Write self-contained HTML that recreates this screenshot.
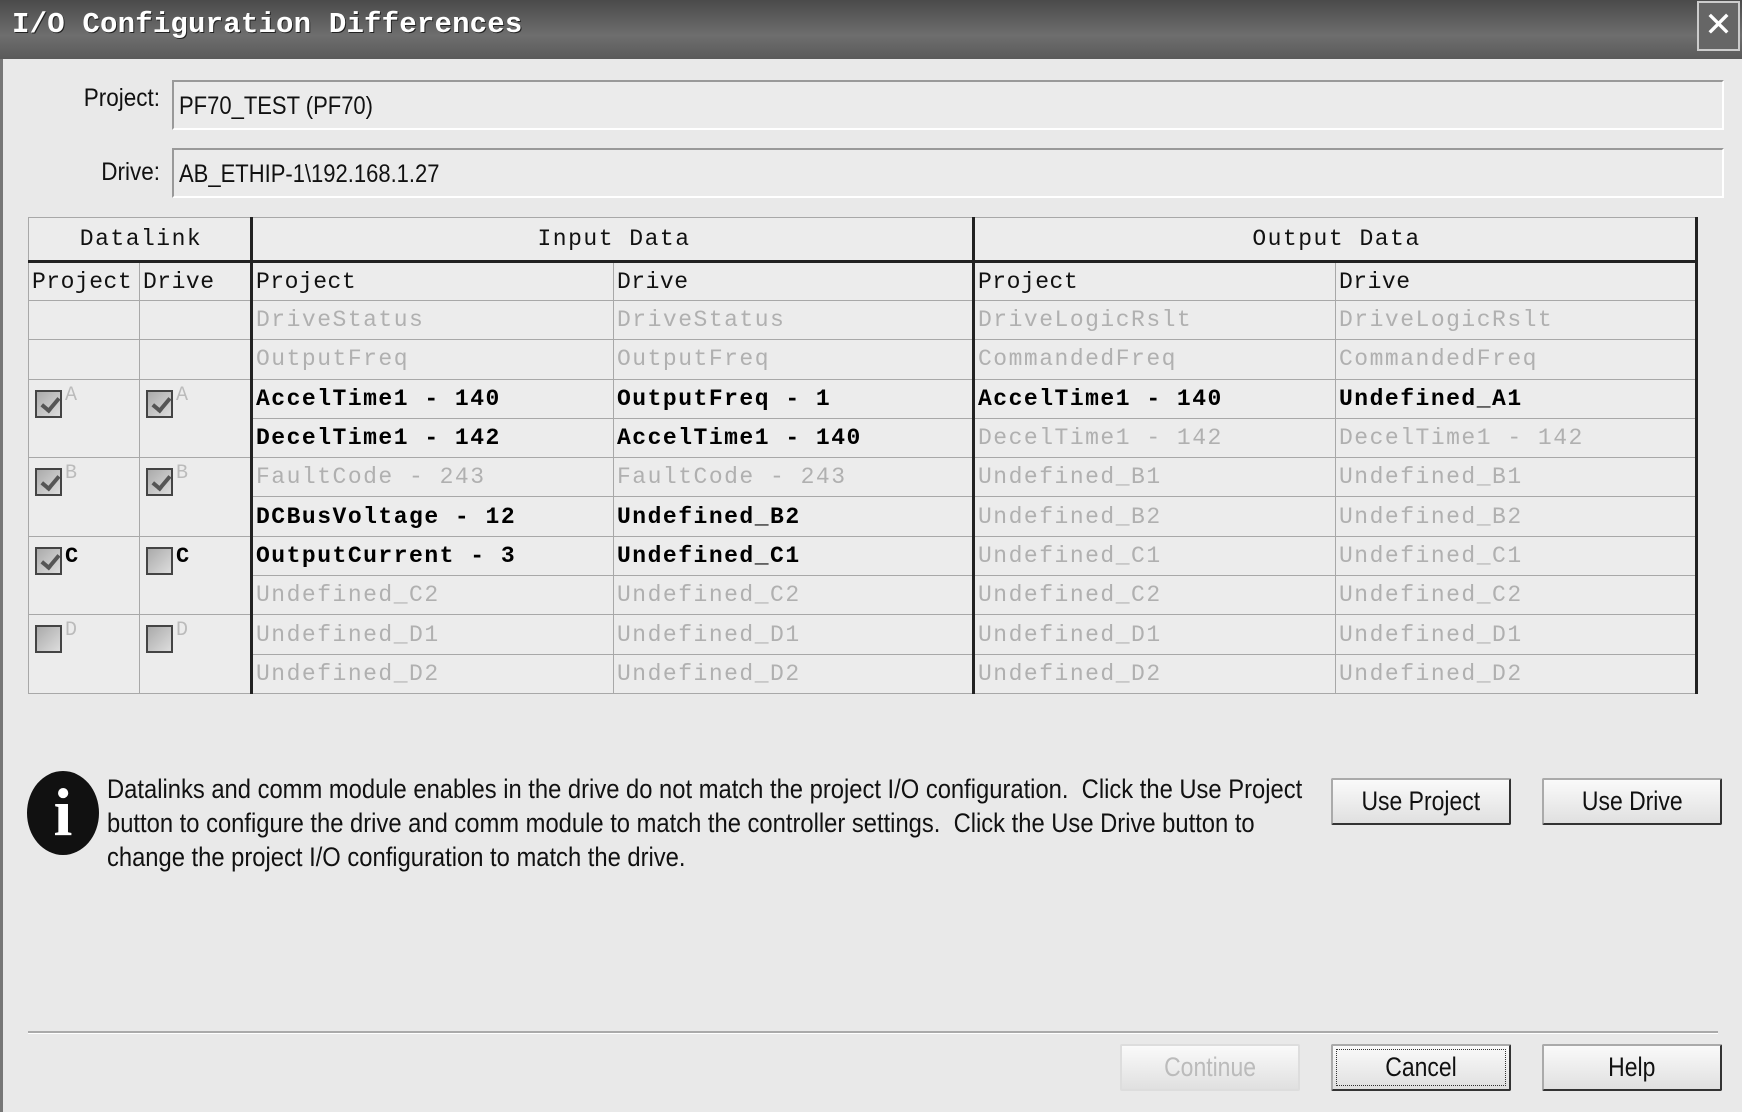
<!DOCTYPE html>
<html><head><meta charset="utf-8"><style>
*{margin:0;padding:0;box-sizing:border-box}
body{width:1742px;height:1112px;background:#e9e9e9;position:relative;overflow:hidden;font-family:"Liberation Sans",sans-serif}
.title{position:absolute;left:0;top:0;width:1742px;height:59px;background:linear-gradient(#4a4a4a,#6e6e6e 60%,#5a5a5a);}
.title span{position:absolute;left:12px;top:8px;color:#fff;font:bold 29px "Liberation Mono",monospace;letter-spacing:0.2px;text-shadow:1px 1px 0 #222}
.close{position:absolute;left:1697px;top:1px;width:43px;height:50px;border:2px solid #ccc;background:#666;color:#fff;font:34px "Liberation Sans",sans-serif;text-align:center;line-height:44px}
.lb{position:absolute;font-size:25px;color:#111;text-align:right;width:160px;left:0;transform:scaleX(0.9);transform-origin:right}
.box{position:absolute;left:172px;width:1552px;height:50px;border-top:2px solid #999;border-left:2px solid #999;border-bottom:2px solid #fff;border-right:2px solid #fff;background:#ebebeb;font-size:25px;padding:10px 0 0 5px;color:#111}
.box span{display:inline-block;transform:scaleX(0.88);transform-origin:left}
table{position:absolute;left:28px;top:217px;border-collapse:collapse;table-layout:fixed;font:23px "Liberation Mono",monospace;letter-spacing:1.5px;background:#ececec}
td{border:1px solid #a8a8a8;height:39.3px;padding:0 0 0 3px;white-space:nowrap;overflow:hidden;color:#b0b0b0;vertical-align:middle}
td.b{color:#000;font-weight:bold}
td.h{color:#111;text-align:center;height:44px;border-bottom:3px solid #222}
td.s{color:#111;height:39px;letter-spacing:0.5px}
.tl{border-left:3px solid #222}
.tr{border-right:3px solid #222}
td.cb{vertical-align:top;padding:10px 0 0 6px}
.chk{display:inline-block;width:27px;height:28px;border:2px solid #444;background:linear-gradient(135deg,#aaa,#ddd);position:relative;vertical-align:top}
.chk.on::after{content:"";position:absolute;left:8px;top:2px;width:7px;height:14px;border-right:4px solid #555;border-bottom:4px solid #555;transform:rotate(40deg)}
.let{display:inline-block;vertical-align:top;font:20px "Liberation Mono",monospace;color:#bbb;margin-left:3px;margin-top:-6px}
.let.k{font:bold 22px "Liberation Mono",monospace;color:#000;margin-top:-3px}
.info{position:absolute;left:27px;top:771px;width:72px;height:84px;border-radius:50%;background:#111}
.info span{position:absolute;left:0;width:72px;text-align:center;top:2px;color:#fff;font:bold 68px "Liberation Serif",serif}
.msg{position:absolute;left:107px;top:772px;font-size:27px;line-height:34px;color:#111;white-space:nowrap;transform:scaleX(0.88);transform-origin:left top}
.btn{position:absolute;width:180px;height:47px;border:2px solid #333;border-top-color:#aaa;border-left-color:#aaa;background:linear-gradient(#fafafa,#e0e0e0);font-size:27px;text-align:center;line-height:42px;color:#111;border-radius:2px}
.btn span{display:inline-block;transform:scaleX(0.85)}
.sep{position:absolute;left:28px;top:1031px;width:1690px;height:3px;background:#aaa;border-bottom:1px solid #fff}
.lborder{position:absolute;left:0;top:59px;width:3px;height:1053px;background:#777}
</style></head><body>
<div class="title"><span>I/O Configuration Differences</span></div>
<div class="close">✕</div>
<div class="lborder"></div>
<div class="lb" style="top:84px">Project:</div>
<div class="box" style="top:80px"><span>PF70_TEST (PF70)</span></div>
<div class="lb" style="top:158px">Drive:</div>
<div class="box" style="top:148px"><span>AB_ETHIP-1\192.168.1.27</span></div>
<table>
<colgroup><col style="width:111px"><col style="width:112px"><col style="width:362px"><col style="width:360px"><col style="width:362px"><col style="width:361px"></colgroup>
<tr><td class="h" colspan="2">Datalink</td><td class="h tl" colspan="2">Input Data</td><td class="h tl tr" colspan="2">Output Data</td></tr>
<tr><td class="s">Project</td><td class="s">Drive</td><td class="s tl">Project</td><td class="s">Drive</td><td class="s tl">Project</td><td class="s tr">Drive</td></tr>
<tr><td></td><td></td><td class="tl">DriveStatus</td><td>DriveStatus</td><td class="tl">DriveLogicRslt</td><td class="tr">DriveLogicRslt</td></tr>
<tr><td></td><td></td><td class="tl">OutputFreq</td><td>OutputFreq</td><td class="tl">CommandedFreq</td><td class="tr">CommandedFreq</td></tr>
<tr><td rowspan="2" class="cb"><span class="chk on"></span><span class="let">A</span></td><td rowspan="2" class="cb"><span class="chk on"></span><span class="let">A</span></td><td class="b tl">AccelTime1 - 140</td><td class="b">OutputFreq - 1</td><td class="b tl">AccelTime1 - 140</td><td class="b tr">Undefined_A1</td></tr>
<tr><td class="b tl">DecelTime1 - 142</td><td class="b">AccelTime1 - 140</td><td class="tl">DecelTime1 - 142</td><td class="tr">DecelTime1 - 142</td></tr>
<tr><td rowspan="2" class="cb"><span class="chk on"></span><span class="let">B</span></td><td rowspan="2" class="cb"><span class="chk on"></span><span class="let">B</span></td><td class="tl">FaultCode - 243</td><td>FaultCode - 243</td><td class="tl">Undefined_B1</td><td class="tr">Undefined_B1</td></tr>
<tr><td class="b tl">DCBusVoltage - 12</td><td class="b">Undefined_B2</td><td class="tl">Undefined_B2</td><td class="tr">Undefined_B2</td></tr>
<tr><td rowspan="2" class="cb"><span class="chk on"></span><span class="let k">C</span></td><td rowspan="2" class="cb"><span class="chk"></span><span class="let k">C</span></td><td class="b tl">OutputCurrent - 3</td><td class="b">Undefined_C1</td><td class="tl">Undefined_C1</td><td class="tr">Undefined_C1</td></tr>
<tr><td class="tl">Undefined_C2</td><td>Undefined_C2</td><td class="tl">Undefined_C2</td><td class="tr">Undefined_C2</td></tr>
<tr><td rowspan="2" class="cb"><span class="chk"></span><span class="let">D</span></td><td rowspan="2" class="cb"><span class="chk"></span><span class="let">D</span></td><td class="tl">Undefined_D1</td><td>Undefined_D1</td><td class="tl">Undefined_D1</td><td class="tr">Undefined_D1</td></tr>
<tr><td class="tl">Undefined_D2</td><td>Undefined_D2</td><td class="tl">Undefined_D2</td><td class="tr">Undefined_D2</td></tr>
</table>
<div class="info"><span>i</span></div>
<div class="msg">Datalinks and comm module enables in the drive do not match the project I/O configuration.&nbsp; Click the Use Project<br>button to configure the drive and comm module to match the controller settings.&nbsp; Click the Use Drive button to<br>change the project I/O configuration to match the drive.</div>
<div class="btn" style="left:1331px;top:778px"><span>Use Project</span></div>
<div class="btn" style="left:1542px;top:778px"><span>Use Drive</span></div>
<div class="sep"></div>
<div class="btn" style="left:1120px;top:1044px;color:#bbb;border-color:#ddd"><span>Continue</span></div>
<div class="btn" style="left:1331px;top:1044px;outline:1px dotted #333;outline-offset:-6px"><span>Cancel</span></div>
<div class="btn" style="left:1542px;top:1044px"><span>Help</span></div>
</body></html>
